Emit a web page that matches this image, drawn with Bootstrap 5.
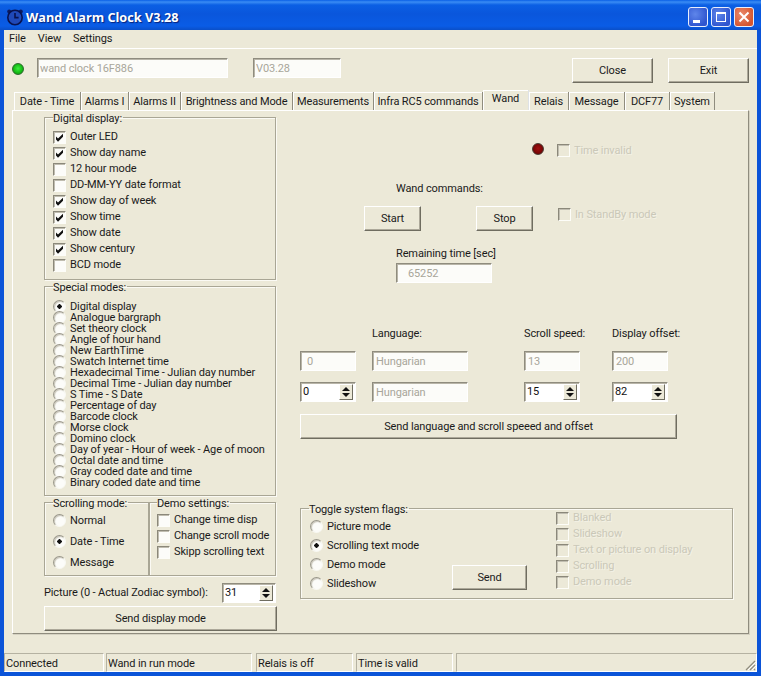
<!DOCTYPE html>
<html lang="en">
<head>
<meta charset="utf-8">
<title>Wand Alarm Clock V3.28</title>
<link href="https://cdn.jsdelivr.net/npm/bootstrap@5.3.0/dist/css/bootstrap.min.css" rel="stylesheet">
<style>
html,body{margin:0;width:761px;height:676px;overflow:hidden;background:#ece9d8}
body{font-family:Roboto,"Liberation Sans",Arial,sans-serif;font-size:11px;line-height:14px;color:#1a1a1a;letter-spacing:-.12px}
.xp-win{width:761px;height:676px;display:flex;flex-direction:column;background:#0b54d8}
.xp-title{height:30px;flex:none;padding:3px 7px 0 6px;background:linear-gradient(#0a5fe6 0,#3a8cf4 2px,#0b5fe4 5px,#0a56dc 14px,#0a5ce6 26px,#0a4fc8 30px)}
.xp-title-text{font-family:"Open Sans",sans-serif;font-weight:700;font-size:12.7px;letter-spacing:0;color:#fff;text-shadow:1px 1px 1px #07227a;margin-left:2px}
.cap-btn{width:20px;height:20px;border:1px solid #e8eefc;border-radius:3px;background:radial-gradient(circle at 35% 35%,#5f86ea,#2f55cf 75%);display:block;line-height:0}
.cap-close{background:radial-gradient(circle at 35% 35%,#ea8a6c,#d5552f 75%)}
.cap-gap{gap:3px}
.xp-client{flex:1;margin:0 4px 4px;background:#ece9d8;display:flex;flex-direction:column;min-height:0}
.xp-menu{height:19px;flex:none;border-bottom:1px solid #fff;padding-left:5px;gap:12px}
.xp-menu span{line-height:20px}
.xp-top{height:41px;flex:none;padding:9px 8px 0 8px}
.lamp{width:12px;height:12px;border-radius:50%;flex:none;display:block}
.lamp-green{background:radial-gradient(circle at 50% 45%,#3cf03c,#14b814 60%,#147a14 100%);border:1px solid #2a6a2a;margin-top:5px}
.lamp-red{background:radial-gradient(circle at 50% 45%,#a01010,#7a0606 60%,#4a0505 100%);border:1px solid #4a3a30}
.sunken{height:20px;border:1px solid;border-color:#8f8c7e #fff #fff #8f8c7e;box-shadow:inset 1px 1px 0 #b8b5a8;background:#fcfcf9;border-radius:0;padding:0 0 0 3px;font-size:11px;line-height:18px;color:#a8a69a;min-height:0;letter-spacing:-.12px}
.sunken:disabled{background:#fcfcf9;color:#a8a69a;opacity:1}
.w-device{width:191px;margin-left:13px;padding-left:2px}
.w-ver{width:88px;margin-left:25px;padding-left:2px}
.xp-btn{background:#ece9d8;border:1px solid;border-color:#fff #6f6d60 #6f6d60 #fff;box-shadow:inset -1px -1px 0 #aca899;border-radius:0;padding:0;font-size:11px;line-height:14px;color:#1a1a1a;height:25px;letter-spacing:-.12px}
.btn-head{width:81px}
.ms-exit{margin-left:15px}
.ms-close{margin-left:auto}
.xp-tabs{height:20px;flex:none;border:0;flex-wrap:nowrap;padding-left:10px;align-items:flex-end;margin:0}
.xp-tabs .nav-link{height:18px;padding:0;border:0;border-right:1px solid #8f8c7e;border-radius:0;color:#1a1a1a;background:#ece9d8;text-align:center;font-size:11px;line-height:19px;margin:0;white-space:nowrap;box-shadow:inset 1px 0 0 #fff,inset 0 1px 0 #fff}
.xp-tabs .nav-link.active{height:20px;background:#ece9d8;color:#1a1a1a;line-height:18px}
.tab-a{width:67px}.tab-b{width:48px}.tab-c{width:52px}.tab-d{width:112px}.tab-e{width:81px}.tab-f{width:109px}.tab-g{width:46px}.tab-h{width:40px}.tab-i{width:56px}.tab-j{width:45px}.tab-k{width:45px}
.xp-panel{height:524px;flex:none;margin:0 8px;border:1px solid;border-color:#fff #8f8c7e #8f8c7e #fff;box-shadow:1px 1px 0 #d5d2c2;padding:0 0 0 31px;gap:23px}
.col-left{width:233px;flex:none}
.col-right{width:433px;flex:none}
fieldset.grp{border:1px solid #a9a695;box-shadow:1px 1px 0 #fbfaf4,inset 1px 1px 0 #fbfaf4;padding:0 0 0 8px;margin:0;min-width:0}
fieldset.grp>legend{float:none;width:auto;margin:0;padding:0 1px 0 0;font-size:11px;height:12px;line-height:16px;background:transparent}
.grp-digital{height:169px;width:232px}
.grp-special{height:216px;width:232px}
.grp-pair{height:80px;width:232px}
.grp-scroll{width:105px}
fieldset.grp.grp-demo{width:127px;padding-left:7px}
fieldset.grp.grp-flags{height:97px;width:433px;margin-top:63px}
.wx{padding:0;margin:0;min-height:0;display:flex;align-items:center;gap:4px;white-space:nowrap;font-size:11px}
.wx .form-check-input{float:none;margin:0;width:13px;height:13px;flex:none;border:1px solid;border-color:#8b887a #fdfdf8 #fdfdf8 #8b887a;box-shadow:inset 1px 1px 0 #c0bdb0;border-radius:0;background-color:#fcfcf9;background-image:none;opacity:1}
.wx .form-check-input:checked{background-color:#fcfcf9;border-color:#8b887a #fdfdf8 #fdfdf8 #8b887a;background-image:url("data:image/svg+xml,%3Csvg xmlns='http://www.w3.org/2000/svg' viewBox='0 0 11 11'%3E%3Cpath d='M2 4.4l2 2.2L9 1.8v3L4 9.8 2 7.6z' fill='%23111'/%3E%3C/svg%3E");background-size:11px;background-position:center}
.wx .form-check-input[type=radio]{border-radius:50%;border-color:#9a978a #f8f8f2 #f8f8f2 #9a978a;box-shadow:inset 1px 1px 1px #c8c5b8}
.wx .form-check-input[type=radio]:checked{background-image:radial-gradient(circle,#111 0,#111 2px,transparent 2.4px);background-size:auto}
.wx .form-check-label{opacity:1;color:#1a1a1a}
.wx.off .form-check-input{background-color:#ece9d8}
.wx.off .form-check-label{color:#aaa89a;text-shadow:1px 1px 0 #fbfaf3}
.h16{height:16px}.h11{height:11px}.h21{height:21px}.h19{height:19px}
.h11 .form-check-label{line-height:11px}
.h11 .form-check-input{margin-block:-1px}
.list-digital{margin-top:6px}
.list-special{margin-top:9px}
.list-scroll{margin-top:2px}
.list-demo{margin-top:4px}
.pic-row{height:20px;margin-top:7px;justify-content:space-between;padding-right:1px;font-size:11px}
.spin{display:flex;align-items:center;height:20px;background:#fff;border:1px solid;border-color:#8f8c7e #fff #fff #8f8c7e;box-shadow:inset 1px 1px 0 #b8b5a8;padding-left:2px;color:#111;font-size:11px;justify-content:space-between}
.w-pic{width:54px}.w-56{width:56px}.w-96{width:96px}
.spin-arrows{width:14px;height:16px;margin-right:2px;background:#ece9d8;border:1px solid;border-color:#fff #6f6d60 #6f6d60 #fff;display:flex;flex-direction:column;align-items:center;justify-content:space-evenly}
.arr-up{width:0;height:0;border:4px solid transparent;border-top:0;border-bottom-color:#111}
.arr-down{width:0;height:0;border:4px solid transparent;border-bottom:0;border-top-color:#111}
.btn-send-mode{display:block;width:233px;margin-top:3px}
.row-lamp{margin:32px 0 0 232px;gap:13px;height:12px}
.row-lamp .wx{margin-top:3px}
.lbl-cmd{margin:27px 0 0 96px;height:14px}
.row-cmd{margin:10px 0 0 64px;height:25px}
.btn-cmd{width:57px}
.ms-stop{margin-left:55px}
.ms-stand{margin:0 0 8px 25px}
.lbl-rem{margin:16px 0 0 96px;height:14px}
.w-rem{width:96px;margin:2px 0 0 96px;padding-left:11px}
.lang-grid{display:grid;grid-template-columns:72px 152px 88px 88px;grid-template-rows:14px 20px 20px;row-gap:11px;margin-top:43px}
.lang-grid>span:not(.spin){padding-top:1px}
.pad-six{padding-left:6px}
.btn-lang{display:block;width:377px;margin-top:12px}
.flag-radios{width:142px;margin:3px 0 0 1px}
.flag-send{align-self:flex-end;margin:0 0 3px 0}
.btn-flag{width:75px}
.flag-checks{margin:-4px 0 0 29px}
.xp-status{height:19px;flex:none;margin-top:19px}
.st-cell{border:1px solid;border-color:#b5b2a2 #fff #fff #b5b2a2;height:19px;line-height:20px;padding-left:1px;font-size:11px;white-space:nowrap;overflow:hidden}
.st-a{width:100px}.st-b{width:146px;margin-left:2px}.st-c{width:97px;margin-left:4px}.st-d{width:97px;margin-left:3px}.st-e{flex:1;margin-left:3px}
.grip{position:absolute;right:1px;bottom:1px;width:12px;height:12px}
.st-wrap{position:relative}
</style>
</head>
<body>
<div class="xp-win">
  <div class="xp-title d-flex align-items-center">
    <svg width="18" height="18" viewBox="0 0 18 18" aria-hidden="true"><circle cx="3.2" cy="3.6" r="2" fill="#0b1a60"/><circle cx="14.8" cy="3.6" r="2" fill="#0b1a60"/><circle cx="9" cy="9.5" r="7.2" fill="#1f49b8" stroke="#08124e" stroke-width="1.6"/><path d="M9 5v4.6h3.6" fill="none" stroke="#08124e" stroke-width="1.6"/></svg>
    <span class="xp-title-text">Wand Alarm Clock V3.28</span>
    <span class="ms-auto d-flex cap-gap">
      <span class="cap-btn"><svg width="18" height="18" viewBox="0 0 18 18"><rect x="4" y="12" width="7" height="3" fill="#fff"/></svg></span>
      <span class="cap-btn"><svg width="18" height="18" viewBox="0 0 18 18"><rect x="4.5" y="4.5" width="9" height="9" fill="none" stroke="#fff"/><rect x="4" y="4" width="10" height="2" fill="#fff"/></svg></span>
      <span class="cap-btn cap-close"><svg width="18" height="18" viewBox="0 0 18 18"><path d="M4.5 4.5l9 9M13.5 4.5l-9 9" stroke="#fff" stroke-width="2"/></svg></span>
    </span>
  </div>
  <div class="xp-client">
    <div class="xp-menu d-flex align-items-center"><span>File</span><span>View</span><span>Settings</span></div>
    <div class="xp-top d-flex align-items-start">
      <span class="lamp lamp-green"></span>
      <input class="form-control sunken w-device" disabled value="wand clock 16F886">
      <input class="form-control sunken w-ver" disabled value="V03.28">
      <button class="btn xp-btn btn-head ms-close" type="button">Close</button>
      <button class="btn xp-btn btn-head ms-exit" type="button">Exit</button>
    </div>
    <ul class="nav nav-tabs xp-tabs">
      <li class="nav-item"><a class="nav-link tab-a" href="#">Date - Time</a></li>
      <li class="nav-item"><a class="nav-link tab-b" href="#">Alarms I</a></li>
      <li class="nav-item"><a class="nav-link tab-c" href="#">Alarms II</a></li>
      <li class="nav-item"><a class="nav-link tab-d" href="#">Brightness and Mode</a></li>
      <li class="nav-item"><a class="nav-link tab-e" href="#">Measurements</a></li>
      <li class="nav-item"><a class="nav-link tab-f" href="#">Infra RC5 commands</a></li>
      <li class="nav-item"><a class="nav-link tab-g active" href="#">Wand</a></li>
      <li class="nav-item"><a class="nav-link tab-h" href="#">Relais</a></li>
      <li class="nav-item"><a class="nav-link tab-i" href="#">Message</a></li>
      <li class="nav-item"><a class="nav-link tab-j" href="#">DCF77</a></li>
      <li class="nav-item"><a class="nav-link tab-k" href="#">System</a></li>
    </ul>
    <div class="xp-panel d-flex">
      <div class="col-left">
        <fieldset class="grp grp-digital">
          <legend>Digital display:</legend>
          <div class="list-digital">
            <div class="form-check wx h16"><input class="form-check-input" type="checkbox" checked><label class="form-check-label">Outer LED</label></div>
            <div class="form-check wx h16"><input class="form-check-input" type="checkbox" checked><label class="form-check-label">Show day name</label></div>
            <div class="form-check wx h16"><input class="form-check-input" type="checkbox"><label class="form-check-label">12 hour mode</label></div>
            <div class="form-check wx h16"><input class="form-check-input" type="checkbox"><label class="form-check-label">DD-MM-YY date format</label></div>
            <div class="form-check wx h16"><input class="form-check-input" type="checkbox" checked><label class="form-check-label">Show day of week</label></div>
            <div class="form-check wx h16"><input class="form-check-input" type="checkbox" checked><label class="form-check-label">Show time</label></div>
            <div class="form-check wx h16"><input class="form-check-input" type="checkbox" checked><label class="form-check-label">Show date</label></div>
            <div class="form-check wx h16"><input class="form-check-input" type="checkbox" checked><label class="form-check-label">Show century</label></div>
            <div class="form-check wx h16"><input class="form-check-input" type="checkbox"><label class="form-check-label">BCD mode</label></div>
          </div>
        </fieldset>
        <fieldset class="grp grp-special">
          <legend>Special modes:</legend>
          <div class="list-special">
            <div class="form-check wx h11"><input class="form-check-input" type="radio" name="sm" checked><label class="form-check-label">Digital display</label></div>
            <div class="form-check wx h11"><input class="form-check-input" type="radio" name="sm"><label class="form-check-label">Analogue bargraph</label></div>
            <div class="form-check wx h11"><input class="form-check-input" type="radio" name="sm"><label class="form-check-label">Set theory clock</label></div>
            <div class="form-check wx h11"><input class="form-check-input" type="radio" name="sm"><label class="form-check-label">Angle of hour hand</label></div>
            <div class="form-check wx h11"><input class="form-check-input" type="radio" name="sm"><label class="form-check-label">New EarthTime</label></div>
            <div class="form-check wx h11"><input class="form-check-input" type="radio" name="sm"><label class="form-check-label">Swatch Internet time</label></div>
            <div class="form-check wx h11"><input class="form-check-input" type="radio" name="sm"><label class="form-check-label">Hexadecimal Time - Julian day number</label></div>
            <div class="form-check wx h11"><input class="form-check-input" type="radio" name="sm"><label class="form-check-label">Decimal Time - Julian day number</label></div>
            <div class="form-check wx h11"><input class="form-check-input" type="radio" name="sm"><label class="form-check-label">S Time - S Date</label></div>
            <div class="form-check wx h11"><input class="form-check-input" type="radio" name="sm"><label class="form-check-label">Percentage of day</label></div>
            <div class="form-check wx h11"><input class="form-check-input" type="radio" name="sm"><label class="form-check-label">Barcode clock</label></div>
            <div class="form-check wx h11"><input class="form-check-input" type="radio" name="sm"><label class="form-check-label">Morse clock</label></div>
            <div class="form-check wx h11"><input class="form-check-input" type="radio" name="sm"><label class="form-check-label">Domino clock</label></div>
            <div class="form-check wx h11"><input class="form-check-input" type="radio" name="sm"><label class="form-check-label">Day of year - Hour of week - Age of moon</label></div>
            <div class="form-check wx h11"><input class="form-check-input" type="radio" name="sm"><label class="form-check-label">Octal date and time</label></div>
            <div class="form-check wx h11"><input class="form-check-input" type="radio" name="sm"><label class="form-check-label">Gray coded date and time</label></div>
            <div class="form-check wx h11"><input class="form-check-input" type="radio" name="sm"><label class="form-check-label">Binary coded date and time</label></div>
          </div>
        </fieldset>
        <div class="grp-pair d-flex">
          <fieldset class="grp grp-scroll">
            <legend>Scrolling mode:</legend>
            <div class="list-scroll">
              <div class="form-check wx h21"><input class="form-check-input" type="radio" name="scr"><label class="form-check-label">Normal</label></div>
              <div class="form-check wx h21"><input class="form-check-input" type="radio" name="scr" checked><label class="form-check-label">Date - Time</label></div>
              <div class="form-check wx h21"><input class="form-check-input" type="radio" name="scr"><label class="form-check-label">Message</label></div>
            </div>
          </fieldset>
          <fieldset class="grp grp-demo">
            <legend>Demo settings:</legend>
            <div class="list-demo">
              <div class="form-check wx h16"><input class="form-check-input" type="checkbox"><label class="form-check-label">Change time disp</label></div>
              <div class="form-check wx h16"><input class="form-check-input" type="checkbox"><label class="form-check-label">Change scroll mode</label></div>
              <div class="form-check wx h16"><input class="form-check-input" type="checkbox"><label class="form-check-label">Skipp scrolling text</label></div>
            </div>
          </fieldset>
        </div>
        <div class="pic-row d-flex align-items-center">
          <span>Picture (0 - Actual Zodiac symbol):</span>
          <span class="spin w-pic"><span>31</span><span class="spin-arrows"><span class="arr-up"></span><span class="arr-down"></span></span></span>
        </div>
        <button class="btn xp-btn btn-send-mode" type="button">Send display mode</button>
      </div>
      <div class="col-right">
        <div class="row-lamp d-flex align-items-center">
          <span class="lamp lamp-red"></span>
          <div class="form-check wx off"><input class="form-check-input" type="checkbox" disabled><label class="form-check-label">Time invalid</label></div>
        </div>
        <div class="lbl-cmd">Wand commands:</div>
        <div class="row-cmd d-flex align-items-center">
          <button class="btn xp-btn btn-cmd" type="button">Start</button>
          <button class="btn xp-btn btn-cmd ms-stop" type="button">Stop</button>
          <div class="form-check wx off ms-stand"><input class="form-check-input" type="checkbox" disabled><label class="form-check-label">In StandBy mode</label></div>
        </div>
        <div class="lbl-rem">Remaining time [sec]</div>
        <input class="form-control sunken w-rem" disabled value="65252">
        <div class="lang-grid">
          <span></span><span>Language:</span><span class="text-nowrap">Scroll speed:</span><span class="text-nowrap">Display offset:</span>
          <input class="form-control sunken w-56 pad-six" disabled value="0">
          <input class="form-control sunken w-96" disabled value="Hungarian">
          <input class="form-control sunken w-56" disabled value="13">
          <input class="form-control sunken w-56" disabled value="200">
          <span class="spin w-56"><span>0</span><span class="spin-arrows"><span class="arr-up"></span><span class="arr-down"></span></span></span>
          <input class="form-control sunken w-96" disabled value="Hungarian">
          <span class="spin w-56"><span>15</span><span class="spin-arrows"><span class="arr-up"></span><span class="arr-down"></span></span></span>
          <span class="spin w-56"><span>82</span><span class="spin-arrows"><span class="arr-up"></span><span class="arr-down"></span></span></span>
        </div>
        <button class="btn xp-btn btn-lang" type="button">Send language and scroll speeed and offset</button>
        <fieldset class="grp grp-flags">
          <legend>Toggle system flags:</legend>
          <div class="d-flex">
            <div class="flag-radios">
              <div class="form-check wx h19"><input class="form-check-input" type="radio" name="fl"><label class="form-check-label">Picture mode</label></div>
              <div class="form-check wx h19"><input class="form-check-input" type="radio" name="fl" checked><label class="form-check-label">Scrolling text mode</label></div>
              <div class="form-check wx h19"><input class="form-check-input" type="radio" name="fl"><label class="form-check-label">Demo mode</label></div>
              <div class="form-check wx h19"><input class="form-check-input" type="radio" name="fl"><label class="form-check-label">Slideshow</label></div>
            </div>
            <div class="flag-send"><button class="btn xp-btn btn-flag" type="button">Send</button></div>
            <div class="flag-checks">
              <div class="form-check wx off h16"><input class="form-check-input" type="checkbox" disabled><label class="form-check-label">Blanked</label></div>
              <div class="form-check wx off h16"><input class="form-check-input" type="checkbox" disabled><label class="form-check-label">Slideshow</label></div>
              <div class="form-check wx off h16"><input class="form-check-input" type="checkbox" disabled><label class="form-check-label">Text or picture on display</label></div>
              <div class="form-check wx off h16"><input class="form-check-input" type="checkbox" disabled><label class="form-check-label">Scrolling</label></div>
              <div class="form-check wx off h16"><input class="form-check-input" type="checkbox" disabled><label class="form-check-label">Demo mode</label></div>
            </div>
          </div>
        </fieldset>
      </div>
    </div>
    <div class="xp-status st-wrap d-flex">
      <div class="st-cell st-a">Connected</div>
      <div class="st-cell st-b">Wand in run mode</div>
      <div class="st-cell st-c">Relais is off</div>
      <div class="st-cell st-d">Time is valid</div>
      <div class="st-cell st-e"></div>
      <svg class="grip" viewBox="0 0 12 12" aria-hidden="true"><path d="M11 2L2 11M11 6l-5 5M11 10l-1 1" stroke="#8f8c7e" stroke-width="1.2"/><path d="M12 3l-8 8M12 7l-4 4" stroke="#fff"/></svg>
    </div>
  </div>
</div>
<script src="https://cdn.jsdelivr.net/npm/bootstrap@5.3.0/dist/js/bootstrap.bundle.min.js"></script>
</body>
</html>
